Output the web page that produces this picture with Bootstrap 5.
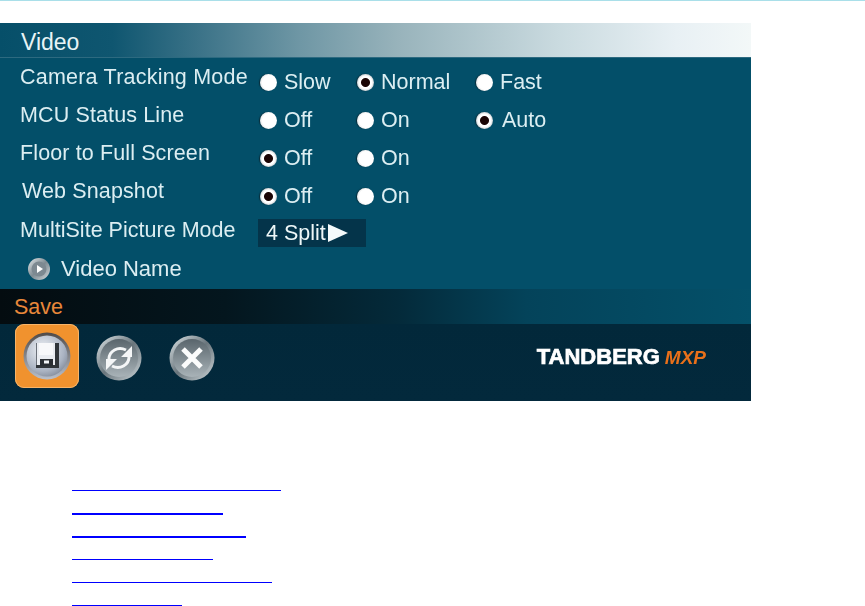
<!DOCTYPE html>
<html lang="en">
<head>
<meta charset="utf-8">
<title>Video settings</title>
<link rel="stylesheet" href="https://cdn.jsdelivr.net/npm/bootstrap@5.3.0/dist/css/bootstrap.min.css">
<style>
body{background:#fff;font-family:"Liberation Sans",Arial,sans-serif;}
.top-rule{height:1px;background:#a9dfe9;}
.panel-wrap{padding-top:22px;width:751px;}
.vc-panel{background:#034f69;color:#dceef2;font-size:21.5px;line-height:26px;height:378px;display:flex;flex-direction:column;}
.vc-head{height:35px;padding:6px 0 0 21px;background:linear-gradient(90deg,#064f69 0%,#0f5670 15%,#3d7489 27%,#6f97a5 40%,#98b3bb 53%,#c9dadf 74%,#e8f0f4 90%,#f3f8f8 100%);border-bottom:1px solid #2d6a80;color:#e8f4f6;line-height:26px;font-size:23px;}
.vc-body{flex:1;padding-top:6px;filter:blur(.35px);}
.vc-row{display:grid;grid-template-columns:258px 97px 119px 1fr;height:38px;align-items:start;}
.vc-label{padding-left:20px;white-space:nowrap;letter-spacing:.12px;}
.vc-label-in{padding-left:22px;}
.vc-label-wide{letter-spacing:.22px;}
.vc-label-tight{letter-spacing:.02px;padding-top:1px;}
.vc-opt{display:flex;align-items:center;gap:7px;padding-top:5px;padding-left:2px;}
.vc-auto{gap:9px;}
.vc-radio{width:17px;height:17px;border-radius:50%;background:radial-gradient(circle at 55% 50%,#fff 0 55%,#ddd 80%,#8a9aa0 100%);box-shadow:-1px 0 1px #0a2b38;flex:none;}
.vc-radio.is-on{background:radial-gradient(circle at 50% 50%,#1b0505 0 4px,#fff 5px 6.5px,#c9cfd2 8.5px);}
.vc-select{display:flex;align-items:center;background:#04344a;width:108px;height:28px;padding-left:8px;gap:2px;margin-top:3px;color:#eef7f8;}
.vc-arrow{width:0;height:0;border-left:20px solid #f4fafb;border-top:9px solid transparent;border-bottom:9px solid transparent;}
.vc-sub{display:flex;align-items:center;gap:10px;padding:2px 0 0 27px;font-size:22px;}
.vc-save{height:35px;padding:5px 0 0 14px;background:linear-gradient(90deg,#040c10 0%,#04161e 30%,#042a3a 53%,#04435a 70%,#045069 100%);color:#e8873a;line-height:26px;}
.vc-foot{height:77px;background:linear-gradient(180deg,#02283a 0%,#03293c 100%);padding-left:15px;display:flex;align-items:flex-start;}
.vc-active{width:64px;height:64px;border-radius:9px;background:#f0922e;box-shadow:inset 0 0 0 1px #f8b468;display:flex;align-items:center;justify-content:center;}
.vc-btn-a{margin:11px 0 0 17px;}
.vc-btn-b{margin:11px 0 0 27px;}
.vc-logo{margin-left:auto;margin-right:45px;margin-top:20px;white-space:nowrap;display:flex;align-items:baseline;gap:5px;line-height:26px;filter:blur(.35px);}
.vc-logo-a{font-weight:700;font-size:22px;color:#fff;-webkit-text-stroke:.7px #fff;}
.vc-logo-b{font-weight:700;font-style:italic;font-size:19px;color:#e8701a;}
.link-list{margin:0;padding:67px 0 0 72px;list-style:none;}
.link-item{height:23px;display:flex;align-items:flex-end;}
.link-item a{display:block;height:1px;background:#0000ff;}
.link-item a.thick{height:2px;margin-bottom:-1px;}
.w-a{width:209px;}.w-b{width:151px;}.w-c{width:174px;}.w-d{width:141px;}.w-e{width:200px;}.w-f{width:110px;}
</style>
</head>
<body>
<div class="top-rule"></div>
<div class="panel-wrap">
  <div class="vc-panel">
    <div class="vc-head">Video</div>
    <div class="vc-body">
      <div class="vc-row"><div class="vc-label vc-label-wide">Camera Tracking Mode</div>
        <div class="vc-opt"><span class="vc-radio"></span>Slow</div>
        <div class="vc-opt"><span class="vc-radio is-on"></span>Normal</div>
        <div class="vc-opt"><span class="vc-radio"></span>Fast</div></div>
      <div class="vc-row"><div class="vc-label">MCU Status Line</div>
        <div class="vc-opt"><span class="vc-radio"></span>Off</div>
        <div class="vc-opt"><span class="vc-radio"></span>On</div>
        <div class="vc-opt vc-auto"><span class="vc-radio is-on"></span>Auto</div></div>
      <div class="vc-row"><div class="vc-label">Floor to Full Screen</div>
        <div class="vc-opt"><span class="vc-radio is-on"></span>Off</div>
        <div class="vc-opt"><span class="vc-radio"></span>On</div></div>
      <div class="vc-row"><div class="vc-label vc-label-in">Web Snapshot</div>
        <div class="vc-opt"><span class="vc-radio is-on"></span>Off</div>
        <div class="vc-opt"><span class="vc-radio"></span>On</div></div>
      <div class="vc-row"><div class="vc-label vc-label-tight">MultiSite Picture Mode</div>
        <div class="vc-select">4 Split<span class="vc-arrow"></span></div></div>
      <div class="vc-sub">
        <svg width="24" height="24" viewBox="0 0 24 24"><defs><linearGradient id="g0" x1="0" y1="0" x2="1" y2="1"><stop offset="0" stop-color="#e6eaec"/><stop offset=".5" stop-color="#7e8b92"/><stop offset="1" stop-color="#d5dadd"/></linearGradient></defs><circle cx="12" cy="12" r="11" fill="url(#g0)"/><circle cx="12" cy="12" r="7.5" fill="#7d8991"/><path d="M10 8l6 4-6 4z" fill="#fff"/></svg>
        <span>Video Name</span>
      </div>
    </div>
    <div class="vc-save">Save</div>
    <div class="vc-foot">
      <div class="vc-active">
        <svg width="50" height="50" viewBox="0 0 50 50"><defs><radialGradient id="g1" cx=".4" cy=".35" r=".8"><stop offset="0" stop-color="#f0f3f7"/><stop offset=".65" stop-color="#aab3c2"/><stop offset="1" stop-color="#707988"/></radialGradient><linearGradient id="g3" x1="0" y1="0" x2="0" y2="1"><stop offset="0" stop-color="#4f4a48"/><stop offset="1" stop-color="#b9c0cc"/></linearGradient></defs><circle cx="25" cy="25" r="23.5" fill="url(#g3)"/><circle cx="25" cy="25" r="20.5" fill="url(#g1)"/><path d="M14 12h20l2 2v22H14z" fill="#e9ecf1"/><path d="M33 12h4v25H14v-3h19z" fill="#30353a"/><rect x="14" y="12" width="1" height="22" fill="#6a7079"/><rect x="18" y="28" width="13" height="7" fill="#2a2e33"/><rect x="22" y="29.5" width="5" height="3" fill="#f3f5f8"/><rect x="17" y="12" width="14" height="12" fill="#f7f8fa"/></svg>
      </div>
      <svg class="vc-btn-a" width="46" height="46" viewBox="0 0 46 46"><defs><linearGradient id="g2" x1="0" y1="0" x2="1" y2="1"><stop offset="0" stop-color="#dfe6e8"/><stop offset=".5" stop-color="#69757c"/><stop offset="1" stop-color="#cfd7da"/></linearGradient><linearGradient id="g4" x1="0" y1="0" x2="0" y2="1"><stop offset="0" stop-color="#59656c"/><stop offset="1" stop-color="#a9b3b8"/></linearGradient></defs><circle cx="23" cy="23" r="22.5" fill="url(#g2)"/><circle cx="23" cy="23" r="19" fill="url(#g4)"/><path d="M13 24c0-8 9-13 17-9M33 22c0 8-9 13-17 9" fill="none" stroke="#f4f6f7" stroke-width="3"/><path d="M25 22h11V11zM21 24H10v11z" fill="#f4f6f7"/></svg>
      <svg class="vc-btn-b" width="46" height="46" viewBox="0 0 46 46"><circle cx="23" cy="23" r="22.5" fill="url(#g2)"/><circle cx="23" cy="23" r="19" fill="url(#g4)"/><path d="M14 14l18 18M32 14L14 32" stroke="#fbfcfc" stroke-width="5"/></svg>
      <div class="vc-logo"><span class="vc-logo-a">TANDBERG</span><span class="vc-logo-b">MXP</span></div>
    </div>
  </div>
</div>
<ul class="link-list">
  <li class="link-item"><a class="w-a" href="#" aria-label="Link 1"></a></li>
  <li class="link-item"><a class="w-b thick" href="#" aria-label="Link 2"></a></li>
  <li class="link-item"><a class="w-c thick" href="#" aria-label="Link 3"></a></li>
  <li class="link-item"><a class="w-d" href="#" aria-label="Link 4"></a></li>
  <li class="link-item"><a class="w-e" href="#" aria-label="Link 5"></a></li>
  <li class="link-item"><a class="w-f" href="#" aria-label="Link 6"></a></li>
</ul>
<script src="https://cdn.jsdelivr.net/npm/bootstrap@5.3.0/dist/js/bootstrap.bundle.min.js"></script>
</body>
</html>
